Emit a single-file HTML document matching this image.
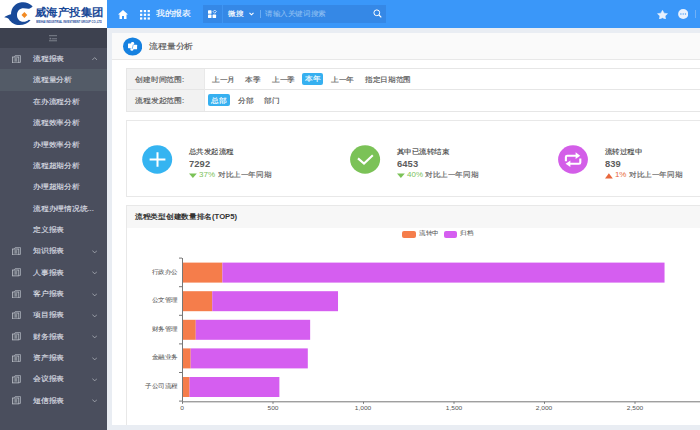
<!DOCTYPE html>
<html><head><meta charset="utf-8">
<style>
*{box-sizing:border-box;margin:0;padding:0}
html,body{width:700px;height:430px;overflow:hidden;background:#e9edf3;font-family:"Liberation Sans",sans-serif;position:relative}
.abs{position:absolute}
.t{position:absolute;white-space:nowrap;transform-origin:0 50%}
.mi{position:absolute;left:0;width:107px;height:21.35px;white-space:nowrap}
.mi span{position:absolute;left:33px;top:-0.4px;line-height:21.35px;font-size:7px;color:#d9dce1;-webkit-text-stroke:0.15px #d9dce1;transform:scaleX(1.11);transform-origin:0 50%}
.mi.act{background:#535b67}
.ico{position:absolute;left:11.9px;top:6.4px;width:9.2px;height:8.4px}
.chev{position:absolute;left:91.6px;top:9.2px;width:5.4px;height:3.4px}
</style></head><body>
<div class="abs" style="left:0;top:0;width:700px;height:27.6px;background:#3a97f9"></div>
<div class="abs" style="left:0;top:0;width:107px;height:27.6px;background:#fff;overflow:hidden">
<svg class="abs" style="left:0;top:0" width="36" height="28" viewBox="0 0 36 28">
  <path d="M32.6 6.2 C29 2.5 25 1.8 21.5 2.3 C15 3 11.2 8 11 14.2 C8.5 14.8 6 15.8 4.2 17.3 C6 17.6 7.5 18 8.8 19 C11 23 15.5 25.2 19.5 25.1 C24 25 28 23 30.6 20.2 L28.8 19.8 C27 21.3 25.5 21.8 23.5 21.8 C19.5 21.8 17 18.8 17 15 C17 11 20 8.3 23.5 8.3 C26 8.3 28 9 29.8 8.5 C31 8 32 7 32.6 6.2 Z" fill="#194a99"/>
  <path d="M24.4 12.1 L27.3 15 L24.4 17.9 L21.5 15 Z" fill="#f28a23"/>
 </svg>
<div class="t" style="left:35px;top:5px;font-size:11px;line-height:14px;font-weight:bold;color:#1b4a98;transform:scaleX(1.04);transform-origin:0 0">威海产投集团</div>
<div class="t" style="left:35.6px;top:20.1px;font-size:10px;line-height:12px;color:#1b4a98;font-weight:bold;transform:scale(0.266,0.36);transform-origin:0 0">WEIHAI INDUSTRIAL INVESTMENT GROUP CO.,LTD</div>
</div>
<svg class="abs" style="left:118px;top:9.5px" width="10" height="9" viewBox="0 0 10 9"><path d="M5 0 L10 4.5 L8.5 4.5 L8.5 9 L6 9 L6 6 L4 6 L4 9 L1.5 9 L1.5 4.5 L0 4.5 Z" fill="#fff"/></svg>
<svg class="abs" style="left:140px;top:9.6px" width="10" height="10" viewBox="0 0 10 10" fill="#fff"><rect x="0" y="0" width="2.3" height="2.2"/><rect x="3.8" y="0" width="2.3" height="2.2"/><rect x="7.6" y="0" width="2.3" height="2.2"/><rect x="0" y="3.7" width="2.3" height="2.2"/><rect x="3.8" y="3.7" width="2.3" height="2.2"/><rect x="7.6" y="3.7" width="2.3" height="2.2"/><rect x="0" y="7.4" width="2.3" height="2.2"/><rect x="3.8" y="7.4" width="2.3" height="2.2"/><rect x="7.6" y="7.4" width="2.3" height="2.2"/></svg>
<div class="t" style="left:155.50px;top:8.20px;font-size:8px;line-height:12px;color:#fff;transform:scaleX(1.09);;-webkit-text-stroke:0.15px #fff">我的报表</div>
<div class="abs" style="left:203px;top:5px;width:183px;height:18px;background:#3588e6"></div>
<div class="abs" style="left:222px;top:5px;width:1px;height:18px;background:#3f95f2"></div>
<svg class="abs" style="left:208px;top:10px" width="9" height="8.2" viewBox="0 0 9 8.2" fill="#fff">
 <rect x="0" y="0.3" width="3.5" height="3.5" rx="0.6"/><rect x="0" y="4.6" width="3.5" height="3.5" rx="0.6"/><rect x="4.6" y="4.6" width="3.5" height="3.5" rx="0.6"/>
 <rect x="5.3" y="0.4" width="2.3" height="2.3" transform="rotate(45 6.45 1.95)" fill="none" stroke="#fff" stroke-width="0.7"/>
</svg>
<div class="t" style="left:227.50px;top:8.20px;font-size:7px;line-height:12px;color:#fff;transform:scaleX(1.1);;-webkit-text-stroke:0.15px #fff">微搜</div>
<svg class="abs" style="left:248.5px;top:12px" width="5" height="4" viewBox="0 0 5 4"><path d="M0.5 0.8 L2.5 2.8 L4.5 0.8" fill="none" stroke="#fff" stroke-width="1.1"/></svg>
<div class="abs" style="left:260.3px;top:10px;width:0.8px;height:8px;background:#6aacf3"></div>
<div class="t" style="left:265.00px;top:8.20px;font-size:7px;line-height:12px;color:#93c1f3;transform:scaleX(1.085);;-webkit-text-stroke:0.05px #93c1f3">请输入关键词搜索</div>
<svg class="abs" style="left:372.5px;top:9px" width="9" height="9" viewBox="0 0 9 9"><circle cx="3.8" cy="3.8" r="2.9" fill="none" stroke="#fff" stroke-width="1"/><path d="M6 6 L8.3 8.3" stroke="#fff" stroke-width="1.1"/></svg>
<svg class="abs" style="left:656.6px;top:9.7px" width="11" height="9.3" viewBox="0 0 24 22" preserveAspectRatio="none"><path d="M12.00 0.80 L15.53 7.45 L22.94 8.75 L17.71 14.15 L18.76 21.60 L12.00 18.30 L5.24 21.60 L6.29 14.15 L1.06 8.75 L8.47 7.45 Z" fill="#e8f1fd" stroke="#e8f1fd" stroke-width="1.2" stroke-linejoin="round"/></svg>
<svg class="abs" style="left:677.5px;top:9.3px" width="10.4" height="10" viewBox="0 0 10.4 10"><ellipse cx="5.2" cy="5" rx="5.1" ry="4.9" fill="#e8f1fd"/><circle cx="2.9" cy="5" r="0.7" fill="#4d9ff7"/><circle cx="5.2" cy="5" r="0.7" fill="#4d9ff7"/><circle cx="7.5" cy="5" r="0.7" fill="#4d9ff7"/></svg>
<div class="abs" style="left:695.3px;top:10px;width:1px;height:8px;background:#6fb0f6"></div>
<div class="abs" style="left:0;top:27.6px;width:107px;height:403px;background:#4a4e5d">
<div class="abs" style="left:0;top:0;width:107px;height:20.3px;background:#3d414f"></div>
<svg class="abs" style="left:49.3px;top:7px" width="8.2" height="7" viewBox="0 0 8.2 7"><path d="M0 0.7 H8.2 M2.6 3.8 H8.2 M0 5.8 H8.2" stroke="#a3a7b0" stroke-width="0.65"/><path d="M1.2 2.8 V4.4" stroke="#a3a7b0" stroke-width="0.9"/></svg>
<div class="mi" style="top:20.90px"><svg class="ico" viewBox="0 0 9.2 8.4"><path d="M2.4 1.9 L3.2 0.6 H8.5 V7.4 H6.9" fill="none" stroke="#b0b5be" stroke-width="0.75"/><rect x="0.6" y="2" width="6.2" height="5.9" fill="#585d6a" stroke="#b9bdc5" stroke-width="0.8"/><rect x="2.5" y="3.1" width="2.5" height="3.5" fill="#8a8f99"/></svg><span>流程报表</span><svg class="chev" style="top:8.3px" viewBox="0 0 5.4 3.4"><path d="M0.3 3 L2.7 0.6 L5.1 3" fill="none" stroke="#c4c7ce" stroke-width="0.65"/></svg></div>
<div class="mi act" style="top:41.70px;height:21.9px"><span style="top:0.15px">流程量分析</span></div>
<div class="mi" style="top:63.60px"><span>在办流程分析</span></div>
<div class="mi" style="top:84.95px"><span>流程效率分析</span></div>
<div class="mi" style="top:106.30px"><span>办理效率分析</span></div>
<div class="mi" style="top:127.65px"><span>流程超期分析</span></div>
<div class="mi" style="top:149.00px"><span>办理超期分析</span></div>
<div class="mi" style="top:170.35px"><span>流程办理情况统...</span></div>
<div class="mi" style="top:191.70px"><span>定义报表</span></div>
<div class="mi" style="top:213.05px"><svg class="ico" viewBox="0 0 9.2 8.4"><path d="M2.4 1.9 L3.2 0.6 H8.5 V7.4 H6.9" fill="none" stroke="#b0b5be" stroke-width="0.75"/><rect x="0.6" y="2" width="6.2" height="5.9" fill="#585d6a" stroke="#b9bdc5" stroke-width="0.8"/><rect x="2.5" y="3.1" width="2.5" height="3.5" fill="#8a8f99"/></svg><span>知识报表</span><svg class="chev" viewBox="0 0 5.4 3.4"><path d="M0.3 0.5 L2.7 2.9 L5.1 0.5" fill="none" stroke="#c4c7ce" stroke-width="0.65"/></svg></div>
<div class="mi" style="top:234.40px"><svg class="ico" viewBox="0 0 9.2 8.4"><path d="M2.4 1.9 L3.2 0.6 H8.5 V7.4 H6.9" fill="none" stroke="#b0b5be" stroke-width="0.75"/><rect x="0.6" y="2" width="6.2" height="5.9" fill="#585d6a" stroke="#b9bdc5" stroke-width="0.8"/><rect x="2.5" y="3.1" width="2.5" height="3.5" fill="#8a8f99"/></svg><span>人事报表</span><svg class="chev" viewBox="0 0 5.4 3.4"><path d="M0.3 0.5 L2.7 2.9 L5.1 0.5" fill="none" stroke="#c4c7ce" stroke-width="0.65"/></svg></div>
<div class="mi" style="top:255.75px"><svg class="ico" viewBox="0 0 9.2 8.4"><path d="M2.4 1.9 L3.2 0.6 H8.5 V7.4 H6.9" fill="none" stroke="#b0b5be" stroke-width="0.75"/><rect x="0.6" y="2" width="6.2" height="5.9" fill="#585d6a" stroke="#b9bdc5" stroke-width="0.8"/><rect x="2.5" y="3.1" width="2.5" height="3.5" fill="#8a8f99"/></svg><span>客户报表</span><svg class="chev" viewBox="0 0 5.4 3.4"><path d="M0.3 0.5 L2.7 2.9 L5.1 0.5" fill="none" stroke="#c4c7ce" stroke-width="0.65"/></svg></div>
<div class="mi" style="top:277.10px"><svg class="ico" viewBox="0 0 9.2 8.4"><path d="M2.4 1.9 L3.2 0.6 H8.5 V7.4 H6.9" fill="none" stroke="#b0b5be" stroke-width="0.75"/><rect x="0.6" y="2" width="6.2" height="5.9" fill="#585d6a" stroke="#b9bdc5" stroke-width="0.8"/><rect x="2.5" y="3.1" width="2.5" height="3.5" fill="#8a8f99"/></svg><span>项目报表</span><svg class="chev" viewBox="0 0 5.4 3.4"><path d="M0.3 0.5 L2.7 2.9 L5.1 0.5" fill="none" stroke="#c4c7ce" stroke-width="0.65"/></svg></div>
<div class="mi" style="top:298.45px"><svg class="ico" viewBox="0 0 9.2 8.4"><path d="M2.4 1.9 L3.2 0.6 H8.5 V7.4 H6.9" fill="none" stroke="#b0b5be" stroke-width="0.75"/><rect x="0.6" y="2" width="6.2" height="5.9" fill="#585d6a" stroke="#b9bdc5" stroke-width="0.8"/><rect x="2.5" y="3.1" width="2.5" height="3.5" fill="#8a8f99"/></svg><span>财务报表</span><svg class="chev" viewBox="0 0 5.4 3.4"><path d="M0.3 0.5 L2.7 2.9 L5.1 0.5" fill="none" stroke="#c4c7ce" stroke-width="0.65"/></svg></div>
<div class="mi" style="top:319.80px"><svg class="ico" viewBox="0 0 9.2 8.4"><path d="M2.4 1.9 L3.2 0.6 H8.5 V7.4 H6.9" fill="none" stroke="#b0b5be" stroke-width="0.75"/><rect x="0.6" y="2" width="6.2" height="5.9" fill="#585d6a" stroke="#b9bdc5" stroke-width="0.8"/><rect x="2.5" y="3.1" width="2.5" height="3.5" fill="#8a8f99"/></svg><span>资产报表</span><svg class="chev" viewBox="0 0 5.4 3.4"><path d="M0.3 0.5 L2.7 2.9 L5.1 0.5" fill="none" stroke="#c4c7ce" stroke-width="0.65"/></svg></div>
<div class="mi" style="top:341.15px"><svg class="ico" viewBox="0 0 9.2 8.4"><path d="M2.4 1.9 L3.2 0.6 H8.5 V7.4 H6.9" fill="none" stroke="#b0b5be" stroke-width="0.75"/><rect x="0.6" y="2" width="6.2" height="5.9" fill="#585d6a" stroke="#b9bdc5" stroke-width="0.8"/><rect x="2.5" y="3.1" width="2.5" height="3.5" fill="#8a8f99"/></svg><span>会议报表</span><svg class="chev" viewBox="0 0 5.4 3.4"><path d="M0.3 0.5 L2.7 2.9 L5.1 0.5" fill="none" stroke="#c4c7ce" stroke-width="0.65"/></svg></div>
<div class="mi" style="top:362.50px"><svg class="ico" viewBox="0 0 9.2 8.4"><path d="M2.4 1.9 L3.2 0.6 H8.5 V7.4 H6.9" fill="none" stroke="#b0b5be" stroke-width="0.75"/><rect x="0.6" y="2" width="6.2" height="5.9" fill="#585d6a" stroke="#b9bdc5" stroke-width="0.8"/><rect x="2.5" y="3.1" width="2.5" height="3.5" fill="#8a8f99"/></svg><span>短信报表</span><svg class="chev" viewBox="0 0 5.4 3.4"><path d="M0.3 0.5 L2.7 2.9 L5.1 0.5" fill="none" stroke="#c4c7ce" stroke-width="0.65"/></svg></div>
</div>
<div class="abs" style="left:112px;top:33px;width:600px;height:392px;background:#fff"></div>
<div class="abs" style="left:112px;top:33px;width:600px;height:26.5px;background:#fafafa;border-bottom:1px solid #e8e8e8"></div>
<svg class="abs" style="left:123px;top:37.2px" width="19.4" height="19" viewBox="0 0 19.4 19">
 <ellipse cx="9.6" cy="9.5" rx="9.6" ry="9.1" fill="#1681e0"/>
 <rect x="5" y="6.6" width="5.4" height="4.6" rx="0.5" fill="#fff"/><rect x="8" y="5" width="3.2" height="3" rx="1.4" fill="#fff"/>
 <rect x="8.5" y="7.7" width="5.6" height="4.5" rx="0.5" fill="#fff"/><rect x="7.4" y="10.8" width="3" height="3" rx="1.4" fill="#fff"/>
 <path d="M10.3 7.6 L9.1 12" stroke="#1681e0" stroke-width="0.55"/>
</svg>
<div class="t" style="left:149.00px;top:41.00px;font-size:8px;line-height:12px;color:#555;transform:scaleX(1.105);;-webkit-text-stroke:0.15px #555">流程量分析</div>
<div class="abs" style="left:126px;top:68px;width:600px;height:44px;border:1px solid #e6e6e6;background:#fff"></div>
<div class="abs" style="left:127px;top:69px;width:77px;height:42px;background:#f2f2f2"></div>
<div class="abs" style="left:127px;top:89px;width:600px;height:1px;background:#e6e6e6"></div>
<div class="abs" style="left:204px;top:69px;width:1px;height:42px;background:#e9e9e9"></div>
<div class="t" style="left:135.20px;top:73.70px;font-size:7px;line-height:12px;color:#555;transform:scaleX(1.12);;-webkit-text-stroke:0.15px #555">创建时间范围:</div>
<div class="t" style="left:135.20px;top:94.70px;font-size:7px;line-height:12px;color:#555;transform:scaleX(1.12);;-webkit-text-stroke:0.15px #555">流程发起范围:</div>
<div class="t" style="left:211.60px;top:73.70px;font-size:7px;line-height:12px;color:#555;transform:scaleX(1.1);;-webkit-text-stroke:0.15px #555">上一月</div>
<div class="t" style="left:245.20px;top:73.70px;font-size:7px;line-height:12px;color:#555;transform:scaleX(1.1);;-webkit-text-stroke:0.15px #555">本季</div>
<div class="t" style="left:271.60px;top:73.70px;font-size:7px;line-height:12px;color:#555;transform:scaleX(1.1);;-webkit-text-stroke:0.15px #555">上一季</div>
<div class="abs" style="left:301.7px;top:72.8px;width:21.7px;height:12px;background:#36b0f0;border-radius:2px"></div>
<div class="t" style="left:304.60px;top:73.30px;font-size:7px;line-height:12px;color:#fff;transform:scaleX(1.1);;-webkit-text-stroke:0.15px #fff">本年</div>
<div class="t" style="left:331.10px;top:73.70px;font-size:7px;line-height:12px;color:#555;transform:scaleX(1.1);;-webkit-text-stroke:0.15px #555">上一年</div>
<div class="t" style="left:365.10px;top:73.70px;font-size:7px;line-height:12px;color:#555;transform:scaleX(1.09);;-webkit-text-stroke:0.15px #555">指定日期范围</div>
<div class="abs" style="left:208.3px;top:93.9px;width:21.7px;height:12.2px;background:#36b0f0;border-radius:2px"></div>
<div class="t" style="left:211.20px;top:94.50px;font-size:7px;line-height:12px;color:#fff;transform:scaleX(1.1);;-webkit-text-stroke:0.15px #fff">总部</div>
<div class="t" style="left:237.80px;top:94.70px;font-size:7px;line-height:12px;color:#555;transform:scaleX(1.1);;-webkit-text-stroke:0.15px #555">分部</div>
<div class="t" style="left:263.90px;top:94.70px;font-size:7px;line-height:12px;color:#555;transform:scaleX(1.1);;-webkit-text-stroke:0.15px #555">部门</div>
<div class="abs" style="left:126px;top:120px;width:600px;height:76.5px;border:1px solid #e8e8e8;background:#fff"></div>
<svg class="abs" style="left:142.3px;top:144.8px" width="31" height="30" viewBox="0 0 31 30"><ellipse cx="15.2" cy="14.5" rx="15" ry="14.2" fill="#35b4f1"/><path d="M15.5 7.3 V21.7 M7.6 14.5 H23.4" stroke="#fff" stroke-width="2"/></svg>
<svg class="abs" style="left:350.2px;top:144.8px" width="30" height="30" viewBox="0 0 30 30" overflow="visible"><ellipse cx="15.1" cy="14.5" rx="15" ry="14.2" fill="#7bc257"/><path d="M8 13.4 L14 18.6 L22.8 10.2" fill="none" stroke="#fff" stroke-width="2.1"/></svg>
<svg class="abs" style="left:558.3px;top:144.8px" width="30" height="30" viewBox="0 0 30 30"><ellipse cx="15" cy="14.5" rx="14.9" ry="14.2" fill="#d35ee8"/>
 <path d="M7.9 16.2 V12 Q7.9 10.7 9.2 10.7 H18.2" fill="none" stroke="#fff" stroke-width="2.1"/><path d="M17.6 7.3 L22.2 10.8 L17.6 14.1 Z" fill="#fff"/>
 <path d="M22.3 13.4 V17.6 Q22.3 18.8 21 18.8 H11.8" fill="none" stroke="#fff" stroke-width="2.1"/><path d="M12.4 15.6 L7.6 18.8 L12.4 22.1 Z" fill="#fff"/>
</svg>
<div class="t" style="left:188.70px;top:145.80px;font-size:7px;line-height:12px;color:#444;transform:scaleX(1.07);;-webkit-text-stroke:0.15px #444">总共发起流程</div>
<div class="t" style="left:188.90px;top:157.80px;font-size:9px;line-height:12px;color:#5c5c5c;transform:scaleX(1.04);font-weight:bold;letter-spacing:0.1px">7292</div>
<svg class="abs" style="left:188.7px;top:171.5px" width="8" height="8" viewBox="0 0 8 8"><path d="M0 1.4 L3.9 6 L7.8 1.4 Z" fill="#7bc257"/></svg>
<div class="t" style="left:199.00px;top:169.20px;font-size:8px;line-height:12px;color:#7bc257;transform:scaleX(1.0);letter-spacing:0px">37%</div>
<div class="t" style="left:217.50px;top:169.20px;font-size:7px;line-height:12px;color:#606060;transform:scaleX(1.085);;-webkit-text-stroke:0.15px #606060">对比上一年同期</div>
<div class="t" style="left:396.80px;top:145.80px;font-size:7px;line-height:12px;color:#444;transform:scaleX(1.07);;-webkit-text-stroke:0.15px #444">其中已流转结束</div>
<div class="t" style="left:397.00px;top:157.80px;font-size:9px;line-height:12px;color:#5c5c5c;transform:scaleX(1.04);font-weight:bold;letter-spacing:0.1px">6453</div>
<svg class="abs" style="left:396.8px;top:171.5px" width="8" height="8" viewBox="0 0 8 8"><path d="M0 1.4 L3.9 6 L7.8 1.4 Z" fill="#7bc257"/></svg>
<div class="t" style="left:407.10px;top:169.20px;font-size:8px;line-height:12px;color:#7bc257;transform:scaleX(1.0);letter-spacing:0px">40%</div>
<div class="t" style="left:425.20px;top:169.20px;font-size:7px;line-height:12px;color:#606060;transform:scaleX(1.085);;-webkit-text-stroke:0.15px #606060">对比上一年同期</div>
<div class="t" style="left:604.60px;top:145.80px;font-size:7px;line-height:12px;color:#444;transform:scaleX(1.07);;-webkit-text-stroke:0.15px #444">流转过程中</div>
<div class="t" style="left:604.80px;top:157.80px;font-size:9px;line-height:12px;color:#5c5c5c;transform:scaleX(1.04);font-weight:bold;letter-spacing:0.1px">839</div>
<svg class="abs" style="left:604.6px;top:171.5px" width="8" height="8" viewBox="0 0 8 8"><path d="M0 6.4 L3.9 1.2 L7.8 6.4 Z" fill="#e8673c"/></svg>
<div class="t" style="left:614.90px;top:169.20px;font-size:8px;line-height:12px;color:#e8673c;transform:scaleX(1.0);letter-spacing:0px">1%</div>
<div class="t" style="left:628.80px;top:169.20px;font-size:7px;line-height:12px;color:#606060;transform:scaleX(1.085);;-webkit-text-stroke:0.15px #606060">对比上一年同期</div>
<div class="abs" style="left:126px;top:205px;width:600px;height:230px;border:1px solid #e8e8e8;background:#fff"></div>
<div class="abs" style="left:127px;top:206px;width:600px;height:22px;background:#f7f7f7"></div>
<div class="t" style="left:134.60px;top:211.00px;font-size:7px;line-height:12px;color:#333;transform:scaleX(1.1);font-weight:bold">流程类型创建数量排名(TOP5)</div>
<div class="abs" style="left:402px;top:230.6px;width:14px;height:7px;background:#f57d4b;border-radius:2px"></div>
<div class="t" style="left:418.70px;top:229.00px;font-size:6px;line-height:8px;color:#555;transform:scaleX(1.09);;-webkit-text-stroke:0.05px #555">流转中</div>
<div class="abs" style="left:443.6px;top:230.6px;width:13.5px;height:7px;background:#d55ef0;border-radius:2px"></div>
<div class="t" style="left:459.90px;top:229.00px;font-size:6px;line-height:8px;color:#555;transform:scaleX(1.09);;-webkit-text-stroke:0.05px #555">归档</div>
<svg class="abs" style="left:0;top:0" width="700" height="430" viewBox="0 0 700 430">
<rect x="182.0" y="262.60" width="40.36" height="20" fill="#f57d4b"/>
<rect x="222.36" y="262.60" width="442.18" height="20" fill="#d55ef0"/>
<rect x="182.0" y="291.20" width="30.23" height="20" fill="#f57d4b"/>
<rect x="212.23" y="291.20" width="125.79" height="20" fill="#d55ef0"/>
<rect x="182.0" y="319.80" width="13.76" height="20" fill="#f57d4b"/>
<rect x="195.76" y="319.80" width="114.39" height="20" fill="#d55ef0"/>
<rect x="182.0" y="348.40" width="8.69" height="20" fill="#f57d4b"/>
<rect x="190.69" y="348.40" width="117.11" height="20" fill="#d55ef0"/>
<rect x="182.0" y="377.00" width="7.60" height="20" fill="#f57d4b"/>
<rect x="189.60" y="377.00" width="89.78" height="20" fill="#d55ef0"/>
<path d="M182.5 258 V401.8 H700" fill="none" stroke="#777" stroke-width="1"/>
<path d="M179 258.10 H182.0" stroke="#777" stroke-width="1"/>
<path d="M179 286.70 H182.0" stroke="#777" stroke-width="1"/>
<path d="M179 315.30 H182.0" stroke="#777" stroke-width="1"/>
<path d="M179 343.90 H182.0" stroke="#777" stroke-width="1"/>
<path d="M179 372.50 H182.0" stroke="#777" stroke-width="1"/>
<path d="M179 401.10 H182.0" stroke="#777" stroke-width="1"/>
<path d="M182.50 401.8 V403.8" stroke="#777" stroke-width="1"/>
<path d="M273.00 401.8 V403.8" stroke="#777" stroke-width="1"/>
<path d="M363.50 401.8 V403.8" stroke="#777" stroke-width="1"/>
<path d="M454.00 401.8 V403.8" stroke="#777" stroke-width="1"/>
<path d="M544.50 401.8 V403.8" stroke="#777" stroke-width="1"/>
<path d="M635.00 401.8 V403.8" stroke="#777" stroke-width="1"/>
</svg>
<div class="t" style="right:522.40px;top:266.50px;font-size:6px;line-height:10px;color:#555;transform:scaleX(1.1);transform-origin:100% 50%;;-webkit-text-stroke:0.05px #555">行政办公</div>
<div class="t" style="right:522.40px;top:295.10px;font-size:6px;line-height:10px;color:#555;transform:scaleX(1.1);transform-origin:100% 50%;;-webkit-text-stroke:0.05px #555">公文管理</div>
<div class="t" style="right:522.40px;top:323.70px;font-size:6px;line-height:10px;color:#555;transform:scaleX(1.1);transform-origin:100% 50%;;-webkit-text-stroke:0.05px #555">财务管理</div>
<div class="t" style="right:522.40px;top:352.30px;font-size:6px;line-height:10px;color:#555;transform:scaleX(1.1);transform-origin:100% 50%;;-webkit-text-stroke:0.05px #555">金融业务</div>
<div class="t" style="right:522.40px;top:380.90px;font-size:6px;line-height:10px;color:#555;transform:scaleX(1.1);transform-origin:100% 50%;;-webkit-text-stroke:0.05px #555">子公司流程</div>
<div class="t" style="left:152.00px;width:60px;text-align:center;top:403.8px;font-size:6px;line-height:9px;color:#555;transform:scaleX(1.1);transform-origin:50% 50%">0</div>
<div class="t" style="left:242.50px;width:60px;text-align:center;top:403.8px;font-size:6px;line-height:9px;color:#555;transform:scaleX(1.1);transform-origin:50% 50%">500</div>
<div class="t" style="left:333.00px;width:60px;text-align:center;top:403.8px;font-size:6px;line-height:9px;color:#555;transform:scaleX(1.1);transform-origin:50% 50%">1,000</div>
<div class="t" style="left:423.50px;width:60px;text-align:center;top:403.8px;font-size:6px;line-height:9px;color:#555;transform:scaleX(1.1);transform-origin:50% 50%">1,500</div>
<div class="t" style="left:514.00px;width:60px;text-align:center;top:403.8px;font-size:6px;line-height:9px;color:#555;transform:scaleX(1.1);transform-origin:50% 50%">2,000</div>
<div class="t" style="left:604.50px;width:60px;text-align:center;top:403.8px;font-size:6px;line-height:9px;color:#555;transform:scaleX(1.1);transform-origin:50% 50%">2,500</div>
<div class="abs" style="left:107px;top:425px;width:593px;height:5px;background:#e9edf3"></div>
</body></html>
